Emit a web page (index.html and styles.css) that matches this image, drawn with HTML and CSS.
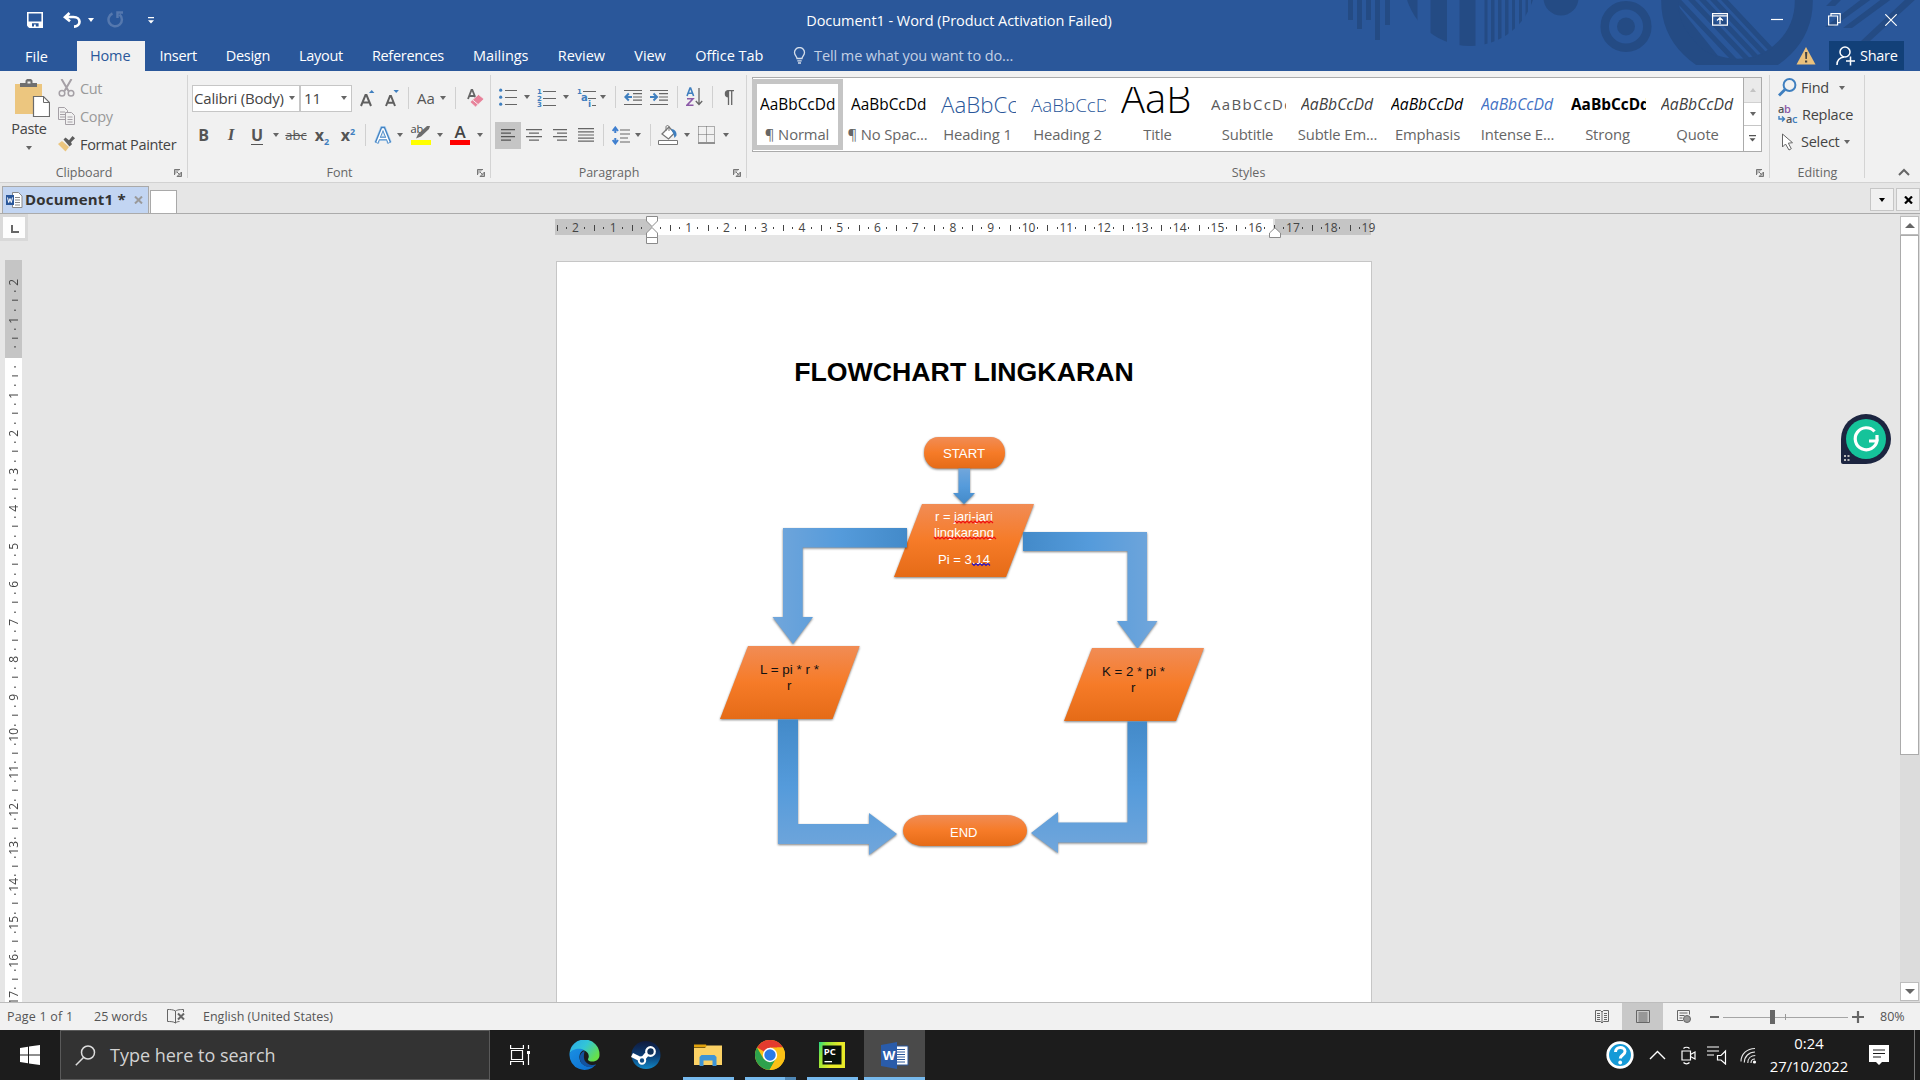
FILE: index.html
```html
<!DOCTYPE html>
<html lang="en">
<head>
<meta charset="utf-8">
<title>Document1 - Word</title>
<link rel="stylesheet" href="styles.css">
</head>
<body>
<div class="app">
  <header class="head">
    <svg class="deco" width="620" height="71" viewBox="1300 0 620 71" fill="#244b84">
      <defs>
        <clipPath id="disc"><circle cx="1470" cy="-20" r="66"/></clipPath>
        <clipPath id="hole"><circle cx="1737" cy="1" r="59"/></clipPath>
        <clipPath id="flat"><rect x="1650" y="0" width="180" height="65"/></clipPath>
      </defs>
      <path d="M1348 0h5v20h-5zM1357 0h5v29h-5zM1366 0h5v20h-5zM1375 0h5v40h-5zM1385 0h5v25h-5z"/>
      <g clip-path="url(#disc)"><path d="M1400 0h17.500v50h-17.500zM1430.500 0h16.500v50h-16.500zM1459.500 0h16v50h-16zM1484.500 0h3v50h-3zM1491 0h3.500v50h-3.500zM1498 0h3.500v50h-3.500zM1505 0h3.500v50h-3.500zM1512 0h3v50h-3zM1519 0h3v50h-3zM1525.500 0h2.500v50h-2.500zM1531 0h3v50h-3z"/></g>
      <circle cx="1561" cy="-2" r="17.500"/>
      <circle cx="1626" cy="26.500" r="21.300" fill="none" stroke="#244b84" stroke-width="8.500"/>
      <circle cx="1626" cy="26.500" r="9"/>
      <circle cx="1737" cy="1" r="66.800" fill="none" stroke="#244b84" stroke-width="18" clip-path="url(#flat)"/>
      <g clip-path="url(#hole)" stroke="#244b84" stroke-width="5" fill="none">
        <path d="M1717-8l60 64M1706-8l64 68M1695-8l66 70M1684-8l66 70M1674-4l66 70" />
        <path d="M1674 8l40 50" stroke-width="9"/>
      </g>
      <path d="M1835 6l-9 0 8-8h9zM1863-2l-38 29h8l40-29zM1883-2l-40 30h9l41-30zM1907-2l-46 43h9l47-43z"/>
    </svg>
    <div class="titlebar">
      <div class="quick">
        <svg width="16" height="16" viewBox="0 0 16 16"><path d="M.8.8h14.400v14.400H2.800L.8 13.200z" fill="none" stroke="#fff" stroke-width="1.600"/><path d="M.8 9.500h14.400v5.700h-3.600v-4H5v4H.8z" fill="#fff"/><path d="M7 12.500h1.800v2.700H7z" fill="#fff"/></svg>
        <svg width="18" height="16" viewBox="0 0 18 16"><path d="M6.500 1L2 5.200l5 4M2.500 5h8c4 0 6 2.300 6 4.800s-2 4.700-5.500 4.900" fill="none" stroke="#fff" stroke-width="2.700"/></svg>
        <i class="caret white"></i>
        <svg width="17" height="17" viewBox="0 0 17 17"><path d="M5.500 2.500a6.700 6.700 0 1 0 7 1M10.500 7V1.500H16" fill="none" stroke="#5578ae" stroke-width="2.500"/></svg>
        <svg width="6" height="7" viewBox="0 0 6 7"><path d="M0 0h6v1.200H0zM0 3.200h6L3 6.500z" fill="#fff"/></svg>
      </div>
      <div class="doctitle">Document1 - Word (Product Activation Failed)</div>
      <div class="winctl">
        <svg width="16" height="13" viewBox="0 0 16 13" fill="none" stroke="#fff" stroke-width="1.200"><path d="M.6.6h14.800v11.500H.6zM.6 2.800h14.800M8 11V5M5 7.500l3-3 3 3"/></svg>
        <svg width="12" height="13" viewBox="0 0 12 13"><path d="M0 6.500h12" stroke="#fff" stroke-width="1.200"/></svg>
        <svg width="13" height="13" viewBox="0 0 13 13" fill="none" stroke="#fff" stroke-width="1.200"><path d="M.6 3h9v9h-9zM3 3V.6h9.200v9H9.600"/></svg>
        <svg width="12" height="12" viewBox="0 0 12 12"><path d="M.3.3l11.400 11.400M11.700.3L.3 11.700" stroke="#fff" stroke-width="1.200"/></svg>
      </div>
    </div>
    <nav class="tabs">
      <a class="file">File</a><a class="on">Home</a><a>Insert</a><a>Design</a><a>Layout</a><a>References</a><a>Mailings</a><a>Review</a><a>View</a><a>Office Tab</a>
      <span class="tell"><svg width="13" height="17" viewBox="0 0 13 17" fill="none" stroke="#d5deeb" stroke-width="1.300"><path d="M4 11.500C4 9.500 1.500 8.500 1.500 5.500a5 5 0 0 1 10 0c0 3-2.500 4-2.500 6zM4.300 13.800h4.400M5 16h3"/></svg>Tell me what you want to do...</span>
      <svg class="warn" width="20" height="18" viewBox="0 0 20 18"><path d="M10 0l9.500 17.500H.5z" fill="#ebc17c"/><path d="M9 5h2.300l-.4 7H9.400zM9 13.500h2.200v2H9z" fill="#444"/></svg>
      <a class="share"><svg width="20" height="20" viewBox="0 0 20 20" fill="none" stroke="#fff" stroke-width="1.500"><circle cx="9" cy="6" r="5"/><path d="M1 19c0-5 3-7.500 7-8M10 15h9M14.500 10.500v9"/></svg>Share</a>
    </nav>
  </header>

  <section class="ribbon">
    <div class="group clip">
      <div class="clipbody">
        <div class="paste">
          <svg width="35" height="39" viewBox="0 0 35 39"><path d="M0 5h27v30H0z" fill="#ecc67f"/><path d="M5 8V4h5.500V1.500L12 0h4l1.500 1.500V4H22v4z" fill="#6f6f6f"/><path d="M12.500 2.500h3v2h-3z" fill="#f1f1f1"/><path d="M18.500 17.500h10l6 6v14h-16z" fill="#fff" stroke="#6b6b6b" stroke-width="1.200"/><path d="M28.500 17.500v6h6" fill="none" stroke="#6b6b6b"/></svg>
          <span>Paste</span><i class="caret"></i>
        </div>
        <div class="cliplist">
          <div class="dim"><svg width="17" height="18" viewBox="0 0 17 18" fill="none" stroke="#a5a0a6" stroke-width="2"><path d="M3.500 0l7 12M13.500 0l-7 12"/><circle cx="4" cy="14.300" r="2.800" stroke-width="1.500"/><circle cx="13" cy="14.300" r="2.800" stroke-width="1.500"/></svg>Cut</div>
          <div class="dim"><svg width="17" height="18" viewBox="0 0 17 18" fill="#f1f1f1" stroke="#a5a0a6"><path d="M.5.500h6l3 3v9h-9zM2 5h5M2 7.500h5M2 10h5"/><path d="M7.500 5.500h6l3 3v9h-9zM9.500 10h5M9.500 12.500h5M9.500 15h5"/></svg>Copy</div>
          <div><svg width="17" height="16" viewBox="0 0 17 16"><path d="M0 8l4-3 7 6-3.500 4.500z" fill="#ecc67f"/><path d="M5.500 3.500l2-2 3.500 2.700L14.500 0 17 2.200l-4 4 1 2-2.500 2.300z" fill="#5c5c5c"/></svg>Format Painter</div>
        </div>
      </div>
      <footer><span>Clipboard</span><svg class="launch" width="8" height="8" viewBox="0 0 8 8"><path d="M.5 6V.5H6M3 3l2.500 2.500M7.500 3v4.500H3z" fill="#777" stroke="#777" fill-opacity=".5"/></svg></footer>
    </div>

    <div class="group font">
      <div class="row frow1">
        <div class="combo">Calibri (Body)<i class="caret"></i></div>
        <div class="combo">11<i class="caret"></i></div>
        <svg width="15" height="17" viewBox="0 0 15 17"><path d="M1 16L5.500 5h1L11 16M3 12.500h6" fill="none" stroke="#5f5f5f" stroke-width="2"/><path d="M9 3l2.700-3 2.700 3z" fill="#3f7fbf"/></svg>
        <svg width="14" height="17" viewBox="0 0 14 17"><path d="M1 16L5 6h1l4 10M3 12.800h5" fill="none" stroke="#5f5f5f" stroke-width="2"/><path d="M8.500 0l2.700 3 2.700-3z" fill="#3f7fbf"/></svg>
        <b class="sep"></b>
        <span class="aa">Aa</span><i class="caret"></i><b class="sep"></b>
        <svg width="17" height="18" viewBox="0 0 17 18"><path d="M1 10L4.500 1h.8L9 10M2.500 7h5" fill="none" stroke="#666" stroke-width="1.800"/><path d="M3 13l8.500-7.500L17 10l-8.500 8z" fill="#e8829a" stroke="#f1f1f1" stroke-width=".8"/><path d="M5.500 10.800l5.500 4.700" stroke="#f1f1f1"/></svg>
      </div>
      <div class="row frow2">
        <span class="gl bold">B</span><span class="gl ital">I</span><span class="gl und">U</span><i class="caret"></i>
        <span class="gl strike">abc</span><span class="gl">x<sub>2</sub></span><span class="gl">x<sup>2</sup></span><b class="sep"></b>
        <svg width="18" height="19" viewBox="0 0 18 19" fill="none"><path d="M2.500 17L8.300 2.500h1.400L15.500 17M5 12.500h8" stroke="#b9d6ef" stroke-width="5"/><path d="M2.500 17L8.300 2.500h1.400L15.500 17M5 12.500h8" stroke="#4484c4" stroke-width="3.600"/><path d="M3 16.500L8.500 3h1L15 16.500M5 12.500h8" stroke="#fff" stroke-width="1.500"/></svg>
        <i class="caret"></i>
        <div class="hl"><span>ab</span><svg width="14" height="13" viewBox="0 0 14 13"><path d="M0 12.500L2 8l9-8h3l-1 3-8 7.500z" fill="#6c6c6c"/></svg></div>
        <i class="caret"></i><span class="fc">A</span><i class="caret"></i>
      </div>
      <footer><span>Font</span><svg class="launch" width="8" height="8" viewBox="0 0 8 8"><path d="M.5 6V.5H6M3 3l2.500 2.500M7.500 3v4.500H3z" fill="#777" stroke="#777" fill-opacity=".5"/></svg></footer>
    </div>

    <div class="group para">
      <div class="row prow1">
        <svg width="18" height="18" viewBox="0 0 18 18"><path d="M6 2.500h12M6 9.500h12M6 16.500h12" stroke="#666"/><g fill="#3f7fbf"><circle cx="1.700" cy="2.200" r="1.600"/><circle cx="1.700" cy="9.200" r="1.600"/><circle cx="1.700" cy="16.200" r="1.600"/></g></svg>
        <i class="caret"></i>
        <svg width="19" height="19" viewBox="0 0 19 19"><path d="M6 3.500h13M6 10.500h13M6 17.500h13" stroke="#666"/><g class="num"><text x="0" y="6">1</text><text x="0" y="12.500">2</text><text x="0" y="19">3</text></g></svg>
        <i class="caret"></i>
        <svg width="19" height="19" viewBox="0 0 19 19"><path d="M6 3.500h13M11 10.500h8M15 17.500h4" stroke="#666"/><g class="num"><text x="0" y="6">1</text><text x="4" y="13" font-size="10">a</text><text x="11" y="19" font-size="9">i</text></g></svg>
        <i class="caret"></i><b class="sep"></b>
        <svg width="18" height="17" viewBox="0 0 18 17"><path d="M0 1.500h18M9 4.700h9M9 8h9M9 11.200h9M0 15.500h18" stroke="#666" stroke-width="1.200"/><path d="M8 8H2M4.800 4.500L1.300 8l3.500 3.500" fill="none" stroke="#3f7fbf" stroke-width="2"/></svg>
        <svg width="18" height="17" viewBox="0 0 18 17"><path d="M0 1.500h18M9 4.700h9M9 8h9M9 11.200h9M0 15.500h18" stroke="#666" stroke-width="1.200"/><path d="M0 8h6M3.500 4.500L7 8l-3.500 3.500" fill="none" stroke="#3f7fbf" stroke-width="2"/></svg>
        <b class="sep"></b>
        <svg width="17" height="20" viewBox="0 0 17 20" fill="none"><path d="M1 9L4 1h.6l3 8M2 6.200h5" stroke="#3f7fbf" stroke-width="1.600"/><path d="M1 11.700h6l-6 6.500h6.500" stroke="#8c5aa8" stroke-width="1.600"/><path d="M13 1v16M9.800 14l3.200 3.500 3.200-3.500" stroke="#666" stroke-width="1.300"/></svg>
        <b class="sep"></b>
        <svg width="11" height="15" viewBox="0 0 11 15"><path d="M4.500.500H11M5.500 0v15M8.700 0v15" stroke="#666" stroke-width="1.300"/><path d="M5.500 0v7.500a3.700 3.700 0 0 1 0-7.500" fill="#666"/></svg>
      </div>
      <div class="row prow2">
        <span class="picked"><svg width="14" height="12" viewBox="0 0 14 12"><path d="M0 .7h14M0 4.200h10M0 7.700h14M0 11.200h10" stroke="#555" stroke-width="1.200"/></svg></span>
        <svg width="16" height="12" viewBox="0 0 16 12"><path d="M0 .7h16M3 4.200h10M0 7.700h16M3 11.200h10" stroke="#666" stroke-width="1.200"/></svg>
        <svg width="14" height="12" viewBox="0 0 14 12"><path d="M0 .7h14M4 4.200h10M0 7.700h14M4 11.200h10" stroke="#666" stroke-width="1.200"/></svg>
        <svg width="16" height="14" viewBox="0 0 16 14"><path d="M0 .7h16M0 3.900h16M0 7h16M0 10.100h16M0 13.200h16" stroke="#666" stroke-width="1.200"/></svg>
        <b class="sep"></b>
        <svg width="18" height="19" viewBox="0 0 18 19"><path d="M8 4h10M8 8h10M8 12h8M8 16h10" stroke="#666" stroke-width="1.200"/><path d="M3.300 2v5M3.300 12v5M.6 5L3.300 1.500 6 5M.6 14l2.700 3.500L6 14" fill="none" stroke="#3f7fcf" stroke-width="2"/></svg>
        <i class="caret"></i><b class="sep"></b>
        <svg width="21" height="20" viewBox="0 0 21 20"><path d="M.5 15.500h19v4H.500z" fill="#fff" stroke="#777"/><path d="M4 9l7-7 5.500 6-6 6z" fill="#fff" stroke="#777" stroke-width="1.300"/><path d="M8 6V2c0-2 3-2 3 0v4" fill="none" stroke="#777"/><path d="M13 4c4 0 6 3 5.500 6.500l-2 2.500-1-4z" fill="#3f7fbf"/></svg>
        <i class="caret"></i>
        <svg width="17" height="18" viewBox="0 0 17 18" fill="none" stroke="#666"><path d="M.5.500h16M.5 8.500h16M.5.500v16M8.500.500v16M16.500.500v16" stroke-dasharray="1 1"/><path d="M0 17h17" stroke-width="1.400"/></svg>
        <i class="caret"></i>
      </div>
      <footer><span>Paragraph</span><svg class="launch" width="8" height="8" viewBox="0 0 8 8"><path d="M.5 6V.5H6M3 3l2.500 2.500M7.500 3v4.500H3z" fill="#777" stroke="#777" fill-opacity=".5"/></svg></footer>
    </div>

    <div class="group styles">
      <div class="gallery">
        <div class="card sel"><p>AaBbCcDd</p><span>¶ Normal</span></div>
        <div class="card"><p>AaBbCcDd</p><span>¶ No Spac...</span></div>
        <div class="card"><p class="h1">AaBbCc</p><span>Heading 1</span></div>
        <div class="card"><p class="h2">AaBbCcD</p><span>Heading 2</span></div>
        <div class="card"><p class="big">AaB</p><span>Title</span></div>
        <div class="card"><p class="sub">AaBbCcDd</p><span>Subtitle</span></div>
        <div class="card"><p class="em soft">AaBbCcDd</p><span>Subtle Em...</span></div>
        <div class="card"><p class="em">AaBbCcDd</p><span>Emphasis</span></div>
        <div class="card"><p class="em blue">AaBbCcDd</p><span>Intense E...</span></div>
        <div class="card"><p class="strong">AaBbCcDd</p><span>Strong</span></div>
        <div class="card"><p class="em soft">AaBbCcDd</p><span>Quote</span></div>
        <div class="gscroll"><b class="off"><i class="caret up"></i></b><b><i class="caret"></i></b><b><svg width="7" height="7" viewBox="0 0 7 7"><path d="M0 0h7v1.200H0zM.5 3.200h6l-3 3.300z" fill="#555"/></svg></b></div>
      </div>
      <footer><span>Styles</span><svg class="launch" width="8" height="8" viewBox="0 0 8 8"><path d="M.5 6V.5H6M3 3l2.500 2.500M7.500 3v4.500H3z" fill="#777" stroke="#777" fill-opacity=".5"/></svg></footer>
    </div>

    <div class="group edit">
      <div class="editlist">
        <div><svg width="19" height="19" viewBox="0 0 19 19" fill="none" stroke="#3f7fbf"><circle cx="11.500" cy="7" r="5.900" stroke-width="2"/><path d="M7 11.500L1 17.500" stroke-width="2.800"/></svg>Find<i class="caret far"></i></div>
        <div><svg width="20" height="19" viewBox="0 0 20 19" class="rep"><text x="0" y="8">a</text><text x="6" y="8" fill="#8c5aa8">b</text><text x="8" y="18">a</text><text x="14" y="18" fill="#3f7fbf">c</text><path d="M1 11v3h5M4 11.500L6.500 14 4 16.500" fill="none" stroke="#3f7fbf" stroke-width="1.400"/></svg>Replace</div>
        <div><svg width="19" height="18" viewBox="0 0 19 18"><path d="M4.500 1v13l3-3 3.500 6 2.300-1.300-3-5.500 4.200-.5z" fill="#fff" stroke="#666"/></svg>Select<i class="caret"></i></div>
      </div>
      <footer><span>Editing</span></footer>
    </div>
    <svg class="fold" width="12" height="8" viewBox="0 0 12 8"><path d="M1 7l5-5 5 5" fill="none" stroke="#666" stroke-width="2"/></svg>
  </section>

  <section class="doctabs">
    <div class="doctab"><svg width="17" height="16" viewBox="0 0 17 16"><path d="M6.500.500h6l3.500 3.500v11.500H6.500z" fill="#fff" stroke="#888"/><path d="M9 5.500h5M9 8h5M9 10.500h5M9 13h5" stroke="#888"/><path d="M0 3h8v10H0z" fill="#2a579a"/><path d="M1.500 5.500l1.200 5L4 6.500l1.300 4 1.200-5" fill="none" stroke="#fff"/></svg><b>Document1 *</b><svg width="9" height="8" viewBox="0 0 9 8"><path d="M1 .5l7 7M8 .5l-7 7" stroke="#9a9a9a" stroke-width="2"/></svg></div>
    <div class="newtab"></div>
    <div class="tabbtns"><b><i class="caret black"></i></b><b><svg width="9" height="8" viewBox="0 0 9 8"><path d="M1 .5l7 7M8 .5l-7 7" stroke="#000" stroke-width="2.200"/></svg></b></div>
  </section>

  <main class="work">
    <div class="leftcol">
      <div class="tabsel"><svg width="8" height="8" viewBox="0 0 8 8"><path d="M1 0v7h7" fill="none" stroke="#666" stroke-width="2"/></svg></div>
      <div class="vruler"><div class="vdark"><i class="first">2</i><i>1</i><i class="half"></i></div><div class="vlight"><i class="half"></i><i>1</i><i>2</i><i>3</i><i>4</i><i>5</i><i>6</i><i>7</i><i>8</i><i>9</i><i>10</i><i>11</i><i>12</i><i>13</i><i>14</i><i>15</i><i>16</i><i>17</i></div></div>
    </div>
    <div class="canvas">
      <div class="hruler">
        <i>2</i><i>1</i><i></i><i>1</i><i>2</i><i>3</i><i>4</i><i>5</i><i>6</i><i>7</i><i>8</i><i>9</i><i>10</i><i>11</i><i>12</i><i>13</i><i>14</i><i>15</i><i>16</i><i>17</i><i>18</i><i class="last">19</i>
        <svg class="indent" width="12" height="28" viewBox="0 0 12 28" fill="#fff" stroke="#8a8a8a"><path d="M.5.500h11v4.500L6 10.500.5 5zM.5 21.500v-4.500L6 11.500l5.500 5.500v4.500zM.5 21.500h11v6H.5z"/></svg>
        <svg class="rindent" width="12" height="12" viewBox="0 0 12 12" fill="#fff" stroke="#8a8a8a"><path d="M.5 10.500V6L6 .800 11.500 6v4.500z"/></svg>
      </div>
      <article class="page">
        <h1>FLOWCHART LINGKARAN</h1>
        <svg class="flow" width="520" height="440" viewBox="704 425 520 440">
          <defs>
            <linearGradient id="o" x2="0" y2="1"><stop offset="0" stop-color="#f18c55"/><stop offset=".5" stop-color="#f67b28"/><stop offset="1" stop-color="#e56b17"/></linearGradient>
            <linearGradient id="bd" x2="0" y2="1"><stop offset="0" stop-color="#71a6db"/><stop offset=".5" stop-color="#559bdb"/><stop offset="1" stop-color="#438ac9"/></linearGradient>
            <linearGradient id="bl" x2="1" y2="0"><stop offset="0" stop-color="#71a6db"/><stop offset=".5" stop-color="#559bdb"/><stop offset="1" stop-color="#438ac9"/></linearGradient>
            <linearGradient id="br" x1="1" x2="0" y2="0"><stop offset="0" stop-color="#71a6db"/><stop offset=".5" stop-color="#559bdb"/><stop offset="1" stop-color="#438ac9"/></linearGradient>
            <linearGradient id="bu" x1="0" y1="1" x2="0" y2="0"><stop offset="0" stop-color="#71a6db"/><stop offset=".5" stop-color="#559bdb"/><stop offset="1" stop-color="#438ac9"/></linearGradient>
          </defs>
          <g class="shape">
            <rect x="924" y="437" width="81" height="31.500" rx="14" ry="15.700" fill="url(#o)"/>
            <path d="M894 577l28-73h112l-28 73z" fill="url(#o)"/>
            <path d="M958.500 468.500h11.500V493h5l-11 11-11-11h5.500z" fill="url(#bd)"/>
            <path d="M907 528v19.500H802.700V617H813l-20 27-20.500-27H783v-89z" fill="url(#bl)"/>
            <path d="M1023 532v19h104.500v70H1117l20.500 27.500 20-27.500H1147v-89z" fill="url(#br)"/>
            <path d="M720 719l28-73h111.700l-27.200 73z" fill="url(#o)"/>
            <path d="M1064 721l28-73h112l-28 73z" fill="url(#o)"/>
            <path d="M778 719.500h20V824h71v-11l28 21-28 21v-11h-91z" fill="url(#bu)"/>
            <path d="M1127.500 721.500h19.500v121h-89V853l-27-20 27-21v10.500h69.500z" fill="url(#bu)"/>
            <rect x="903" y="815" width="124" height="31" rx="20" ry="15.500" fill="url(#o)"/>
          </g>
          <g class="lbl">
            <text x="943" y="458" textLength="42" lengthAdjust="spacingAndGlyphs">START</text>
            <text x="935" y="521" textLength="58" lengthAdjust="spacingAndGlyphs">r = jari-jari</text>
            <text x="934" y="537" textLength="60" lengthAdjust="spacingAndGlyphs">lingkarang</text>
            <text x="938" y="564" textLength="52" lengthAdjust="spacingAndGlyphs">Pi = 3.14</text>
            <text x="950" y="837" textLength="27.500" lengthAdjust="spacingAndGlyphs">END</text>
            <g fill="#111"><text x="760" y="674" textLength="59" lengthAdjust="spacingAndGlyphs">L = pi * r *</text><text x="787" y="690">r</text><text x="1102" y="676" textLength="63" lengthAdjust="spacingAndGlyphs">K = 2 * pi *</text><text x="1131" y="692">r</text></g>
          </g>
          <g fill="none" stroke-width="1.200">
            <path d="M955 521l2 2 2-2 2 2 2-2 2 2 2-2 2 2 2-2 2 2 2-2 2 2 2-2 2 2 2-2 2 2 2-2 2 2 2-2 2 2M934 537l2 2 2-2 2 2 2-2 2 2 2-2 2 2 2-2 2 2 2-2 2 2 2-2 2 2 2-2 2 2 2-2 2 2 2-2 2 2 2-2 2 2 2-2 2 2 2-2 2 2 2-2 2 2 2-2 2 2 2-2 2 2" stroke="#f01010"/>
            <path d="M972 563.500l2 2 2-2 2 2 2-2 2 2 2-2 2 2 2-2 2 2" stroke="#2a10c0"/>
          </g>
        </svg>
      </article>
      <svg class="gram" width="50" height="51" viewBox="0 0 50 51"><path d="M25 0a25 25 0 0 1 0 50H2a2 2 0 0 1-2-2V25A25 25 0 0 1 25 0z" fill="#1c2540"/><circle cx="25" cy="25" r="20" fill="#15c39a"/><path d="M33.500 17.500A11 11 0 1 0 36 27h-8M36 21v6" fill="none" stroke="#fff" stroke-width="3.200"/><path d="M3 41h2v2H3zM6.500 41h2v2h-2zM3 45h2v2H3zM6.500 45h2v2h-2z" fill="#bbb"/></svg>
    </div>
    <div class="vscroll"><b><i class="caret up"></i></b><span class="thumb"></span><b class="down"><i class="caret"></i></b></div>
  </main>

  <footer class="status">
    <span class="s1">Page 1 of 1</span><span class="s2">25 words</span>
    <svg width="18" height="15" viewBox="0 0 18 15" fill="none" stroke="#666"><path d="M8.500 2v12M8.500 2C6 .5 3 .5.500.5v12c3 0 6 0 8 1.500 1-1 2-1.400 4-1.500M8.500 2c1-.8 3-1.500 8-1.500V3"/><path d="M11 4.500l6 6M17 4.500l-6 6" stroke-width="2"/></svg>
    <span class="s3">English (United States)</span>
    <div class="views">
      <span><svg width="14" height="13" viewBox="0 0 14 13" fill="none" stroke="#666"><path d="M.5.500h5L7 2 8.500.5h5v11h-5L7 13l-1.500-1.500h-5zM7 2v11M2 3.500h3M2 5.500h3M2 7.500h3M2 9.500h3M9 3.500h3M9 5.500h3M9 7.500h3M9 9.500h3"/></svg></span>
      <span class="act"><svg width="14" height="13" viewBox="0 0 14 13" fill="none" stroke="#666"><path d="M.5.500h13v12H.500zM2.500 3h9M2.500 5h9M2.500 7h9M2.500 9h9M2.500 11h9"/></svg></span>
      <span><svg width="14" height="13" viewBox="0 0 14 13" fill="none" stroke="#666"><path d="M6 10.500H.5V.500h12v4M2.500 3h8M2.500 5.500h5M2.500 8h3"/><circle cx="10" cy="9" r="3.500" fill="#999" stroke="#666"/></svg></span>
    </div>
    <div class="zoom"><i class="minus"></i><div class="slide"><i class="mid"></i><i class="knob"></i></div><svg width="12" height="12" viewBox="0 0 12 12"><path d="M0 6h12M6 0v12" stroke="#666" stroke-width="2.200"/></svg><span>80%</span></div>
  </footer>

  <footer class="taskbar">
    <div class="start"><svg width="20" height="20" viewBox="0 0 20 20" fill="#fff"><path d="M0 3l8-1.200V9.500H0zM9 1.600L20 0v9.500H9zM0 10.500h8v7.800L0 17.100zM9 10.500h11V20L9 18.400z"/></svg></div>
    <div class="search"><svg width="21" height="21" viewBox="0 0 21 21" fill="none" stroke="#ddd" stroke-width="1.500"><circle cx="13" cy="7.500" r="6.500"/><path d="M8.500 12.500L.8 20.200"/></svg>Type here to search</div>
    <div class="apps">
      <span><svg width="20" height="20" viewBox="0 0 20 20" fill="none" stroke="#fff" stroke-width="1.200"><path d="M1.500 5.500h11v9h-11zM.6 0v3.500h12.800V0M.6 20v-3.500h12.800V20M18.500 0v4M18.500 9v11"/><path d="M17 6h3v3h-3z" fill="#fff" stroke="none"/></svg></span>
      <span><svg width="31" height="31" viewBox="0 0 31 31"><defs><linearGradient id="e1" x2="1" y2=".6"><stop offset="0" stop-color="#2ba7e8"/><stop offset=".5" stop-color="#32c5d8"/><stop offset="1" stop-color="#66e04a"/></linearGradient><linearGradient id="e2" x2="1" y2="1"><stop offset="0" stop-color="#1a8fe3"/><stop offset="1" stop-color="#0b6ccc"/></linearGradient></defs><path d="M.5 14A15 15 0 0 1 30.500 15c0 4-3 6.500-7 6.500-3 0-5-1-4.500-2.500 2-3 0-8-5-9C8 9 2 11 .5 14z" fill="url(#e1)"/><path d="M.5 14C2 9 11 7.500 15 10c-3 1-5 4-4.500 8 .5 6 6 9 11 8.500 3-.5 5.500-2 5.500-2A15 15 0 0 1 .5 14z" fill="url(#e2)"/><path d="M15.500 11c-3 1-5 4-4.700 7.500.5 6 6 9 11 8.500 3-.5 5.500-2 5-2.500-4 1.500-10-.5-11.500-5-1-3.500 0-6 .2-8.500z" fill="#14539f"/></svg></span>
      <span><svg width="30" height="28" viewBox="0 0 30 28"><defs><linearGradient id="st" x2="0" y2="1"><stop offset="0" stop-color="#101a3c"/><stop offset=".5" stop-color="#0b3b72"/><stop offset="1" stop-color="#1287c5"/></linearGradient></defs><ellipse cx="15" cy="14" rx="14.500" ry="14" fill="url(#st)"/><path d="M1 14l10 5 5-6" fill="none" stroke="#fff" stroke-width="4.500"/><circle cx="19.500" cy="10.500" r="4.300" fill="#103058" stroke="#fff" stroke-width="2.200"/><circle cx="11" cy="19.500" r="3.200" fill="#0e4a82" stroke="#fff" stroke-width="2"/></svg></span>
      <span class="run"><svg width="28" height="24" viewBox="0 0 28 24"><path d="M0 1.500h12l2 3H0z" fill="#e0a10c"/><path d="M0 5h11l2-2.500h15V22H0z" fill="#fbd165"/><path d="M5.500 23V14l2-2h13l2 2v9h-4v-5.500h-9V23z" fill="#3e94d6"/></svg></span>
      <span class="run two"><svg width="30" height="30" viewBox="0 0 30 30"><circle cx="15" cy="15" r="15" fill="#fbc116"/><path d="M15 15L2 7.500A15 15 0 0 1 28 7.500H15z" fill="#e33b2e"/><path d="M2 7.500A15 15 0 0 0 14.500 30l6.500-11-6-4-6.500 3.700z" fill="#2da14c"/><path d="M14.500 30L21 18.500l1-11h6A15 15 0 0 1 14.500 30z" fill="#fbc116"/><circle cx="15" cy="15" r="7.200" fill="#fff"/><circle cx="15" cy="15" r="5.700" fill="#2a7be6"/></svg></span>
      <span class="run"><svg width="26" height="26" viewBox="0 0 26 26"><defs><linearGradient id="pc" x2=".7" y2=".3"><stop offset="0" stop-color="#21d789"/><stop offset=".35" stop-color="#8fe63a"/><stop offset="1" stop-color="#e8ea28"/></linearGradient></defs><path d="M0 0h26v26H0z" fill="url(#pc)"/><path d="M3.500 3.500h19v19h-19z" fill="#08130a"/><path d="M5.500 19h7.500v1.300H5.500z" fill="#fff"/><text x="4.800" y="13" class="pct">PC</text></svg></span>
      <span class="run cur"><svg width="28" height="27" viewBox="0 0 28 27"><path d="M15 4h12v19H15z" fill="#fff" stroke="#2a579a"/><path d="M16 7.500h8M16 10h8M16 12.500h8M16 15h8M16 17.500h8M16 20h8" stroke="#2a579a"/><path d="M0 3l16-3v27L0 24z" fill="#2a5caa"/><text x="1.800" y="18" class="wt">W</text></svg></span>
    </div>
    <div class="tray">
      <svg width="28" height="28" viewBox="0 0 28 28"><circle cx="14" cy="14" r="12.300" fill="#149ad7" stroke="#fff" stroke-width="2.700"/><path d="M9.500 11c0-6 9.500-6 9.500-.5 0 3.500-4.700 3.500-4.700 7" fill="none" stroke="#fff" stroke-width="3"/><circle cx="14.200" cy="21.500" r="1.900" fill="#fff"/></svg>
      <svg width="17" height="10" viewBox="0 0 17 10"><path d="M1 9l7.500-7.500L16 9" fill="none" stroke="#fff" stroke-width="1.400"/></svg>
      <svg width="15" height="19" viewBox="0 0 15 19" fill="none" stroke="#fff" stroke-width="1.200"><path d="M1 5h8.500v9H1zM9.500 8.500L14 6v7l-4.500-2.500M2.500 2.500C4 .8 7 .8 8.500 2.500M2.500 16.500c1.500 1.700 4.500 1.700 6 0"/></svg>
      <svg width="20" height="20" viewBox="0 0 20 20" fill="none" stroke="#fff" stroke-width="1.200"><path d="M0 2h12M0 6h12M0 10h7"/><path d="M10.500 10.500H14l4.500-4.500v13L14 15h-3.500z"/></svg>
      <svg width="17" height="17" viewBox="0 0 17 17" fill="none" stroke="#e8e8e8" stroke-width="1.100"><path d="M1 14.500C1 7 7 1.500 15 1.500M4.300 15.500C4.300 9.500 9 5 15 5M7.800 16c0-4.500 3-7.500 7.500-7.500M11 16c0-2.500 1.500-4 4-4"/><circle cx="14.500" cy="15" r="1.600" fill="#fff" stroke="none"/></svg>
      <div class="clock"><span>0:24</span><span>27/10/2022</span></div>
      <svg width="20" height="20" viewBox="0 0 20 20"><path d="M0 0h20v17h-7l-3 3-3-3H0z" fill="#fff"/><path d="M4 5h12M4 8.500h12M4 12h8" stroke="#1c1c1c" stroke-width="1.200"/></svg>
      <i class="edge"></i>
    </div>
  </footer>
</div>
</body>
</html>
```
FILE: styles.css
```css
* { box-sizing: border-box; }
body { margin: 0; background: #e6e6e6; }
.app {
  width: 1920px; height: 1080px; overflow: hidden;
  display: grid; grid-template-rows: 71px 112px 31px 789px 27px 50px;
  font: 15px "Open Sans", "Noto Sans", sans-serif; color: #444;
}
svg { display: block; flex: none; }
i, b { font-style: normal; }

.caret { display: inline-block; flex: none; width: 0; height: 0; border: 3.5px solid transparent; border-top: 4px solid #666; border-bottom: 0; }
.caret.up { border-top: 0; border-bottom: 4px solid #666; }
.caret.white { border-top-color: #fff; }
.caret.black { border-top-color: #000; }

/* title and tabs */
.head { background: #2a579a; color: #fff; display: grid; grid-template-rows: 41px 30px; position: relative; }
.deco { position: absolute; right: 0; top: 0; }
.titlebar { display: grid; grid-template-columns: 400px 1fr 400px; align-items: center; position: relative; padding-bottom: 2px; }
.quick { display: flex; align-items: center; padding-left: 27px; }
.quick svg:nth-child(2) { margin-left: 20px; }
.quick .caret { margin-left: 7px; }
.quick svg:nth-child(4) { margin-left: 13px; }
.quick svg:nth-child(5) { margin: 2px 0 0 24px; }
.doctitle { text-align: center; font-size: 14.5px; letter-spacing: -.05px; padding: 2px 2px 0 0; }
.winctl { display: flex; align-items: center; padding-left: 192px; }
.winctl svg:nth-child(2) { margin-left: 43px; }
.winctl svg:nth-child(3) { margin-left: 45px; }
.winctl svg:nth-child(4) { margin-left: 44px; }
.tabs { display: flex; align-items: stretch; line-height: 29px; position: relative; font-size: 14.5px; letter-spacing: -.3px; }
.tabs a { padding: 0 14.5px; white-space: nowrap; }
.tabs a:nth-child(n+7) { letter-spacing: -.03px; padding-right: 14.8px; }
.tabs .file { width: 77px; padding: 1px 0 0 25px; letter-spacing: 0; }
.tabs .on { background: #f1f1f1; color: #2a579a; width: 68px; padding: 0 13px; letter-spacing: -.15px; }
.tell { display: flex; align-items: center; gap: 8px; padding: 0 0 2px 15px; color: #c3d0e4; letter-spacing: -.1px; }
.warn { margin: 6px 13px 0 auto; }
.tabs a.share { display: flex; align-items: center; gap: 4px; width: 75px; height: 29px; margin-right: 16px; padding: 0 0 0 7px; background: #124078; line-height: 29px; letter-spacing: -.3px; }

/* ribbon */
.ribbon { display: flex; background: #f1f1f1; border-bottom: 1px solid #d2d2d2; }
.group { display: flex; flex-direction: column; position: relative; background: linear-gradient(#d4d4d4, #d4d4d4) no-repeat right 4px / 1px 103px; }
.group > footer { display: flex; justify-content: center; align-items: center; height: 19px; margin-top: auto; font-size: 12.5px; color: #666; position: relative; }
.launch { position: absolute; right: 6px; top: 6px; }
.clip { width: 188px; }
.clip footer { padding-right: 20px; }
.font { width: 303px; }
.font footer { padding-right: 19px; }
.para { width: 256px; }
.para footer { padding-right: 20px; }
.styles { width: 1023px; }
.styles footer { padding-right: 20px; }
.font footer { padding-right: 0; }
.edit { width: 95px; }
.fold { margin: 97px 0 0 33px; }

.clipbody { display: flex; padding-top: 3px; font-size: 14.5px; letter-spacing: -.35px; }
.paste { width: 58px; padding-top: 5px; display: flex; flex-direction: column; align-items: center; }
.paste svg { margin-left: 6px; }
.paste span { line-height: 22px; }
.paste .caret { margin-top: 6px; }
.cliplist { display: grid; grid-template-rows: 28px 28px 28px; }
.cliplist div { display: flex; align-items: center; gap: 5px; white-space: nowrap; }
.cliplist .dim { color: #999; }

.row { display: grid; height: 28px; align-items: center; justify-items: center; }
.sep { width: 1px; height: 22px; background: #d0d0d0; }
.frow1 { margin: 13px 0 9px 4px; grid-template-columns: 108px 52px 30px 20px 12px 24px 10px 14px 26px; }
.frow2 { margin-left: 4px; grid-template-columns: 23px 32px 20px 17px 24px 28px 24px 10px 26px 8px 33px 6px 34px 5px; }
.combo { justify-self: stretch; height: 27px; border: 1px solid #c6c6c6; background: #fff; display: flex; align-items: center; justify-content: space-between; padding: 0 4px 0 1px; white-space: nowrap; font-size: 15px; letter-spacing: -.2px; }
.combo + .combo { padding-left: 3px; }
.aa { color: #555; }
.gl { font-size: 16px; font-weight: 700; color: #555; white-space: nowrap; }
.ital { font: italic 700 17px "Liberation Serif", serif; }
.und { border-bottom: 1.5px solid #555; line-height: 18px; }
.strike { font-size: 13px; font-weight: 400; text-decoration: line-through; }
.gl sub, .gl sup { font-size: 9px; color: #3f7fbf; line-height: 0; }
.hl { width: 20px; height: 20px; border-bottom: 5px solid #ff0; display: flex; }
.hl span { font-size: 11px; line-height: 7px; }
.hl svg { margin: 1px 0 0 -7px; }
.fc { width: 20px; height: 20px; border-bottom: 5px solid #f00; text-align: center; font-weight: 600; font-size: 17px; line-height: 13px; }
.prow1 { margin: 12px 0 10px 4px; grid-template-columns: 26px 12px 27px 12px 28px 6px 19px 16px 36px 0 35px 0 32px; }
.prow2 { margin-left: 4px; grid-template-columns: 26px 26px 26px 26px 8px 28px 6px 19px 16px 22px 17px 22px; }
.picked { width: 26px; height: 27px; background: #c5c5c5; display: grid; place-items: center; }
.num { font: 700 7px "DejaVu Sans", sans-serif; fill: #3f7fbf; }

.gallery { display: grid; grid-template-columns: repeat(11, 90px) 18px; width: 1010px; height: 75px; margin: 6px 0 0 5px; border: 1px solid #ababab; background: #fff; }
.card { margin: 1px 0; height: 71px; padding: 8px 7px 0 8px; }
.card.sel { border: 5px solid #c5c5c5; padding: 3px 2px 0 3px; margin-left: -1px; }
.card p { margin: 0; height: 28px; line-height: 35px; overflow: hidden; color: #000; font-size: 15.400px; white-space: nowrap; }
.card.sel p { margin-right: -3px; }
.card span { display: block; text-align: center; line-height: 24px; margin: 7px -7px 0 -9px; color: #666; white-space: nowrap; font-size: 14.800px; letter-spacing: -.12px; }
.card .h1 { font-size: 22.300px; font-weight: 300; color: #2a579a; }
.card .h2 { font-size: 18.800px; font-weight: 300; color: #2a579a; line-height: 37px; }
.card .big { font-size: 40px; font-weight: 300; line-height: 22px; }
.card .sub { color: #5a5a5a; font-size: 15px; letter-spacing: 1.300px; }
.card .em { font-style: italic; font-size: 15.700px; }
.card .soft { color: #404040; }
.card .blue { color: #4472c4; }
.card .strong { font-weight: 700; }
.gscroll { display: grid; grid-template-rows: 25px 23px 25px; border-left: 1px solid #ababab; }
.gscroll b { display: grid; place-items: center; border-bottom: 1px solid #c6c6c6; }
.gscroll b:last-child { border: 0; }
.gscroll .off { background: #e6e6e6; opacity: .8; }
.gscroll .off .caret { border-bottom-color: #b5b5b5; }

.editlist { display: grid; grid-template-rows: 27px 27px 27px; padding: 3px 0 0 8px; font-size: 14.5px; letter-spacing: -.25px; }
.editlist div { display: flex; align-items: center; gap: 4px; }
.editlist .far { margin-left: 6px; }
.rep { font: 600 11px "Open Sans", sans-serif; fill: #555; }

/* document tabs */
.doctabs { display: flex; align-items: flex-end; border-bottom: 1px solid #ababab; padding-left: 2px; }
.doctab { display: flex; align-items: center; width: 147px; height: 27px; padding-left: 3px; background: #c2d5f2; border: 1px solid #a9a9a9; border-bottom: 0; color: #333; }
.doctab b { margin: 0 8px 2px 2px; white-space: nowrap; letter-spacing: .2px; }
.newtab { width: 27px; height: 23px; margin-left: 1px; background: #fff; border: 1px solid #a9a9a9; border-bottom: 0; }
.tabbtns { margin: 0 0 2px auto; display: flex; gap: 2px; }
.tabbtns b { width: 24px; height: 23px; border: 1px solid #c6c6c6; background: #f1f1f1; display: grid; place-items: center; }

/* workspace */
.work { display: grid; grid-template: 788px / 28px 1fr 20px; border-bottom: 1px solid #bdbdbd; overflow: hidden; }
.tabsel { width: 28px; height: 27px; border: 3px solid #d9d9d9; background: #fdfdfd; display: grid; place-items: center; padding: 3px 0 0 2px; }
.vruler { width: 17px; margin: 19px 0 0 5px; font-size: 12px; line-height: 18px; }
.vruler i { display: block; width: 17px; height: 37.700px; writing-mode: vertical-rl; transform: rotate(180deg); text-align: center;
  background: linear-gradient(#444, #444) no-repeat 4px 0 / 6px 1px, linear-gradient(#444, #444) no-repeat 6px 25% / 2px 1px, linear-gradient(#444, #444) no-repeat 6px 75% / 2px 1px; }
.vruler .first { background: linear-gradient(#444, #444) no-repeat 4px 0 / 6px 1px, linear-gradient(#444, #444) no-repeat 6px 25% / 2px 1px; }
.vdark { height: 98px; background: #c5c5c5; padding-top: 3px; }
.vlight { height: 645px; background: #fff; overflow: hidden; }
.vruler .half { height: 18.400px; background: linear-gradient(#444, #444) no-repeat 4px 0 / 6px 1px, linear-gradient(#444, #444) no-repeat 6px 50% / 2px 1px; }
.vdark .half { background: linear-gradient(#444, #444) no-repeat 6px 50% / 2px 1px; }
.canvas { position: relative; padding: 5px 0 0 527px; }
.hruler { position: relative; display: flex; width: 816px; height: 16px; padding-left: 1.500px; font-size: 12px; line-height: 18px; background: linear-gradient(90deg, #c5c5c5 97px, #fff 97px 718px, #e0e0e0 718px 720px, #c5c5c5 720px); }
.hruler i { flex: 0 0 37.770px; text-align: center;
  background: linear-gradient(#444, #444) no-repeat 0 6px / 1px 6px, linear-gradient(#444, #444) no-repeat 25% 8px / 1px 2px, linear-gradient(#444, #444) no-repeat 75% 8px / 1px 2px; }
.hruler .last { background: linear-gradient(#444, #444) no-repeat 0 6px / 1px 6px, linear-gradient(#444, #444) no-repeat 25% 8px / 1px 2px; }
.indent { position: absolute; left: 91px; top: -3px; }
.rindent { position: absolute; left: 714px; top: 8px; }
.page { width: 816px; height: 760px; margin: 26px 0 0 1px; background: #fff; border: 1px solid #c6c6c6; display: flex; flex-direction: column; align-items: center; }
.page h1 { margin: 94px 0 0; font: 700 26.700px/32px "Liberation Sans", Arial, sans-serif; color: #000; white-space: nowrap; }
.flow { margin-top: 37px; }
.shape > * { filter: drop-shadow(0 1.500px 1.200px rgba(0, 0, 0, .5)); }
.lbl { font: 13.300px "Liberation Sans", Arial, sans-serif; fill: #fff; }
.gram { position: absolute; left: 1813px; top: 200px; }
.vscroll { display: flex; flex-direction: column; padding: 2px 1px 1px 0; background: #dcdcdc; }
.vscroll b { height: 19px; background: #fff; border: 1px solid #bdbdbd; display: grid; place-items: center; }
.vscroll .caret { border-width: 5px; border-bottom: 0; }
.vscroll .caret.up { border-top: 0; border-bottom: 5px solid #666; }
.thumb { height: 520px; background: #fff; border: 1px solid #ababab; }
.vscroll .down { margin-top: auto; }

/* status bar */
.status { display: flex; align-items: center; background: #f1f1f1; font-size: 12.500px; color: #555; }
.s1 { width: 87px; margin-left: 7px; letter-spacing: .2px; }
.s2 { width: 73px; }
.s3 { margin-left: 18px; }
.views { display: flex; margin-left: auto; height: 27px; }
.views span { width: 41px; display: grid; place-items: center; }
.views .act { background: #c8c8c8; }
.zoom { display: flex; align-items: center; width: 216px; padding-left: 6px; }
.zoom .minus { width: 9px; height: 2px; background: #666; }
.slide { position: relative; width: 125px; height: 14px; margin: 0 4px; display: flex; align-items: center; background: linear-gradient(#a5a5a5, #a5a5a5) no-repeat 0 7px / 125px 1px; }
.knob { position: absolute; left: 47px; width: 5px; height: 14px; background: #666; }
.mid { position: absolute; left: 62px; width: 1px; height: 6px; background: #999; }
.zoom span { margin-left: 16px; }

/* taskbar */
.taskbar { display: flex; background: #1c1c1c; color: #fff; }
.start { width: 60px; display: grid; place-items: center; }
.search { width: 430px; background: #333; border: 1px solid #5a5a5a; display: flex; align-items: center; gap: 14px; padding-left: 14px; font-size: 18px; color: #d2d2d2; }
.apps { display: flex; }
.apps span { width: 62px; display: grid; place-items: center; }
.apps span:first-child { width: 60px; margin-right: 3px; }
.apps .run { background: linear-gradient(#76b9ed, #76b9ed) no-repeat 6px 47px / 51px 3px; }
.apps .two { background: linear-gradient(90deg, #76b9ed 40px, #4f87b5 40px) no-repeat 6px 47px / 51px 3px; }
.apps .cur { background: linear-gradient(#76b9ed, #76b9ed) no-repeat 0 47px / 61px 3px, #4a4a4a; width: 61px; margin-left: 1px; }
.pct { font: 700 9.500px "Open Sans", sans-serif; fill: #fff; }
.wt { font: 700 13px "Open Sans", sans-serif; fill: #fff; }
.tray { display: flex; align-items: center; margin-left: auto; width: 314px; }
.tray > svg:nth-child(2) { margin-left: 15px; }
.tray > svg:nth-child(3) { margin-left: 15px; }
.tray > svg:nth-child(4) { margin-left: 11px; }
.tray > svg:nth-child(5) { margin-left: 13px; }
.clock { width: 100px; margin-left: 2px; display: grid; justify-items: center; line-height: 23px; font-size: 14.800px; }
.tray > svg:nth-child(7) { margin-left: 10px; }
.edge { width: 1px; height: 50px; background: #777; margin-left: 25px; }
```
